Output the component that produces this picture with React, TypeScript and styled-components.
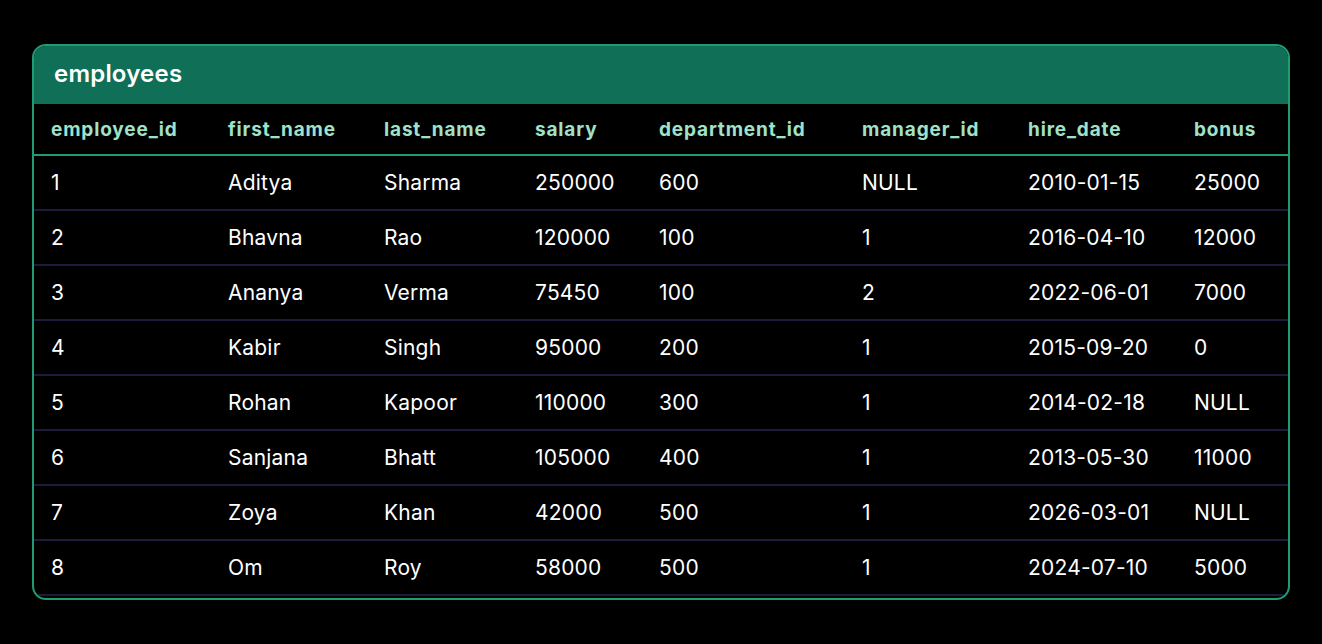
import React from "react";
import styled, { createGlobalStyle } from "styled-components";

const GlobalStyle = createGlobalStyle`
  html, body {
    margin: 0;
    padding: 0;
    background: #000;
  }
  body {
    font-family: Inter, "Noto Sans", sans-serif;
    color: #fff;
  }
`;

const Page = styled.div`
  padding: 44px 32px 0 32px;
  width: 1258px;
`;

const Card = styled.div`
  border: 2px solid #1f9c72;
  border-radius: 14px;
  overflow: hidden;
  background: #000;
`;

const CardTitle = styled.div`
  height: 58px;
  display: flex;
  align-items: center;
  padding: 0 20px 3px 20px;
  box-sizing: border-box;
  background: #106f57;
  font-size: 24px;
  font-weight: 600;
  letter-spacing: 0.2px;
  color: #fff;
`;

const Table = styled.table`
  width: 100%;
  border-collapse: collapse;
  table-layout: fixed;
`;

const HeadCell = styled.th<{ $w: number }>`
  box-sizing: border-box;
  width: ${(p) => p.$w}px;
  text-align: left;
  padding: 0 0 0 17px;
  height: 51px;
  font-size: 19px;
  font-weight: 700;
  letter-spacing: 0.85px;
  color: #9fe2c8;
  border-bottom: 2px solid #1f9c72;
  white-space: nowrap;
`;

const Row = styled.tr`
  border-bottom: 2px solid #1d1a3b;
`;

const Cell = styled.td`
  padding: 0 0 0 17px;
  height: 53px;
  font-size: 21px;
  letter-spacing: 0.2px;
  color: #fff;
  white-space: nowrap;
`;

const columns: [string, number][] = [
  ["employee_id", 177],
  ["first_name", 156],
  ["last_name", 151],
  ["salary", 124],
  ["department_id", 203],
  ["manager_id", 166],
  ["hire_date", 166],
  ["bonus", 111],
];

const rows = [
  ["1", "Aditya", "Sharma", "250000", "600", "NULL", "2010-01-15", "25000"],
  ["2", "Bhavna", "Rao", "120000", "100", "1", "2016-04-10", "12000"],
  ["3", "Ananya", "Verma", "75450", "100", "2", "2022-06-01", "7000"],
  ["4", "Kabir", "Singh", "95000", "200", "1", "2015-09-20", "0"],
  ["5", "Rohan", "Kapoor", "110000", "300", "1", "2014-02-18", "NULL"],
  ["6", "Sanjana", "Bhatt", "105000", "400", "1", "2013-05-30", "11000"],
  ["7", "Zoya", "Khan", "42000", "500", "1", "2026-03-01", "NULL"],
  ["8", "Om", "Roy", "58000", "500", "1", "2024-07-10", "5000"],
];

const App = () => {
  return (
    <Page>
      <GlobalStyle />
      <Card>
        <CardTitle>employees</CardTitle>
        <Table>
          <thead>
            <tr>
              {columns.map(([name, w]) => (
                <HeadCell key={name} $w={w}>
                  {name}
                </HeadCell>
              ))}
            </tr>
          </thead>
          <tbody>
            {rows.map((r) => (
              <Row key={r[0]}>
                {r.map((v, i) => (
                  <Cell key={i}>{v}</Cell>
                ))}
              </Row>
            ))}
          </tbody>
        </Table>
        <div style={{ height: 2 }} />
      </Card>
    </Page>
  );
};

export default App;
